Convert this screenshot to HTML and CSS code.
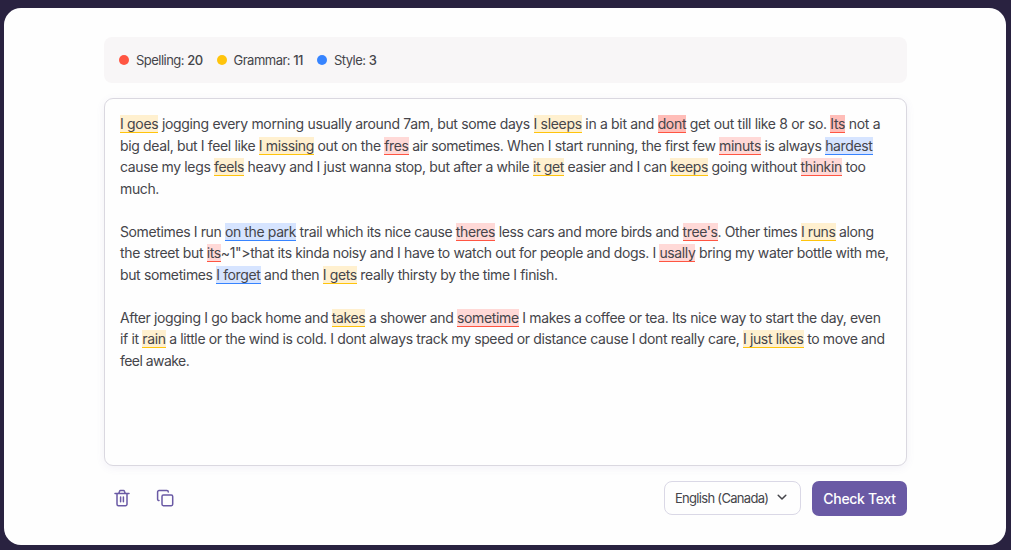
FILE: index.html
```
<!DOCTYPE html>
<html lang="en">

<head>
    <meta charset="UTF-8">
    <title>Grammar Checker</title>
    <link rel="stylesheet" href="styles.css">
</head>

<body>
    <main class="panel">
        <div class="checker">
            <div class="stats">
                <span class="stat"><i class="dot red"></i>Spelling: <b>20</b></span>
                <span class="stat"><i class="dot yellow"></i>Grammar: <b>11</b></span>
                <span class="stat"><i class="dot blue"></i>Style: <b>3</b></span>
            </div>

            <div class="editor">
                <p>
                    <span class="line loose"><mark class="grammar">I goes</mark> jogging every morning usually around 7am, but some days <mark class="grammar">I sleeps</mark> in a bit and <mark class="spelling active">dont</mark> get out till like 8 or so. <mark class="spelling active">Its</mark> not a</span>
                    <span class="line">big deal, but I feel like <mark class="grammar">I missing</mark> out on the <mark class="spelling">fres</mark> air sometimes. When I start running, the first few <mark class="spelling">minuts</mark> is always <mark class="style">hardest</mark></span>
                    <span class="line">cause my legs <mark class="grammar">feels</mark> heavy and I just wanna stop, but after a while <mark class="grammar">it get</mark> easier and I can <mark class="grammar">keeps</mark> going without <mark class="spelling">thinkin</mark> too</span>
                    <span class="line">much.</span>
                </p>
                <p>
                    <span class="line tight">Sometimes I run <mark class="style">on the park</mark> trail which its nice cause <mark class="spelling">theres</mark> less cars and more birds and <mark class="spelling">tree's</mark>. Other times <mark class="grammar">I runs</mark> along</span>
                    <span class="line">the street but <mark class="spelling">its</mark>~1"&gt;that its kinda noisy and I have to watch out for people and dogs. I <mark class="spelling">usally</mark> bring my water bottle with me,</span>
                    <span class="line">but sometimes <mark class="style">I forget</mark> and then <mark class="grammar">I gets</mark> really thirsty by the time I finish.</span>
                </p>
                <p>
                    <span class="line">After jogging I go back home and <mark class="grammar">takes</mark> a shower and <mark class="spelling">sometime</mark> I makes a coffee or tea. Its nice way to start the day, even</span>
                    <span class="line">if it <mark class="grammar">rain</mark> a little or the wind is cold. I dont always track my speed or distance cause I dont really care, <mark class="grammar">I just likes</mark> to move and</span>
                    <span class="line last">feel awake.</span>
                </p>
            </div>

            <div class="toolbar">
                <button class="icon-button" aria-label="Clear">
                    <svg width="18" height="18" viewBox="0 0 18 18">
                        <path d="M2 4.5h14M4 4.5v10.7a1.5 1.5 0 0 0 1.5 1.5h7a1.5 1.5 0 0 0 1.5-1.5V4.5M5.8 4.3l.8-2.1a1 1 0 0 1 .9-.7h3a1 1 0 0 1 .9.7l.8 2.1M7.6 8v4.8M10.4 8v4.8" />
                    </svg>
                </button>
                <button class="icon-button" aria-label="Copy">
                    <svg width="18" height="18" viewBox="0 0 18 18">
                        <rect x="6" y="6" width="10.7" height="10.7" rx="1.4" />
                        <path d="M3 11.6a1.4 1.4 0 0 1-1.4-1.4V2.9a1.4 1.4 0 0 1 1.4-1.4h7.9a1.4 1.4 0 0 1 1.4 1.4" />
                    </svg>
                </button>
                <button class="language">
                    <span>English (Canada)</span>
                    <svg width="10" height="7" viewBox="0 0 10 7">
                        <path d="M1.2 1.2l3.8 3.8 3.8-3.8" />
                    </svg>
                </button>
                <button class="check">Check Text</button>
            </div>
        </div>
    </main>
</body>

</html>
```
FILE: styles.css
```
* {
    box-sizing: border-box;
}

body {
    margin: 0;
    padding: 8px 5px 5px 4px;
    height: 550px;
    background-color: #292240;
    font-family: Inter, "Liberation Sans", sans-serif;
    color: #45454a;
    overflow: hidden;
}

.panel {
    height: 537px;
    padding-top: 29px;
    background-color: #fefefe;
    border-radius: 17px;
}

.checker {
    width: 803px;
    margin-left: 100px;
}

.stats {
    display: flex;
    align-items: center;
    gap: 14px;
    height: 46px;
    padding: 0 15px;
    margin-bottom: 15px;
    border-radius: 8px;
    background-color: #f8f6f7;
    font-size: 13px;
    letter-spacing: -0.52px;
}

.stat {
    display: flex;
    align-items: center;
    white-space: pre;
}

.stat b {
    font-weight: 500;
}

.dot {
    width: 10px;
    height: 10px;
    margin-right: 7px;
    border-radius: 50%;
}

.red {
    background-color: #ff5542;
}

.yellow {
    background-color: #ffc40c;
}

.blue {
    background-color: #3784ff;
}

.editor {
    height: 368px;
    padding: 14px 15px 0;
    border: 1px solid #dad8e0;
    border-radius: 9px;
    background-color: #fefefe;
    box-shadow: 0 2px 8px rgba(106, 90, 165, 0.08);
    font-size: 14px;
    line-height: 21.55px;
}

.editor p {
    margin: 0 0 21.55px;
}

.line {
    display: block;
    white-space: nowrap;
    letter-spacing: -0.365px;
}

.loose {
    letter-spacing: -0.325px;
}

.tight {
    letter-spacing: -0.38px;
}

.last {
    letter-spacing: -0.55px;
}

mark {
    color: inherit;
    border-bottom: 1px solid;
}

.grammar {
    background-color: #fff0cf;
    border-color: #ffc40c;
}

.spelling {
    background-color: #ffd9d7;
    border-color: #ff5542;
}

.spelling.active {
    background-color: #ffbdb8;
}

.style {
    background-color: #d6e4ff;
    border-color: #3784ff;
}

.toolbar {
    display: flex;
    align-items: center;
    margin-top: 15px;
    height: 35px;
}

button {
    font-family: inherit;
    cursor: pointer;
}

svg {
    display: block;
    fill: none;
    stroke: currentColor;
    stroke-width: 1.5;
    stroke-linecap: round;
    stroke-linejoin: round;
}

.icon-button {
    padding: 0;
    margin: 0 16px 1px 9px;
    border: none;
    background: none;
    color: #6a5aa5;
}

.language {
    display: flex;
    align-items: center;
    justify-content: space-between;
    width: 137px;
    height: 34px;
    margin: 0 0 1px auto;
    padding: 0 13px 2px 10px;
    border: 1px solid #dad8e6;
    border-radius: 8px;
    background-color: #fefefe;
    color: #45454a;
    font-size: 13px;
    letter-spacing: -0.7px;
}

.language span {
    padding-top: 2px;
}

.check {
    width: 95px;
    height: 35px;
    margin-left: 11px;
    padding: 0;
    border: none;
    border-radius: 7px;
    background-color: #6a5aa5;
    color: #fff;
    font-size: 14px;
    font-weight: 500;
    letter-spacing: -0.3px;
}
```
